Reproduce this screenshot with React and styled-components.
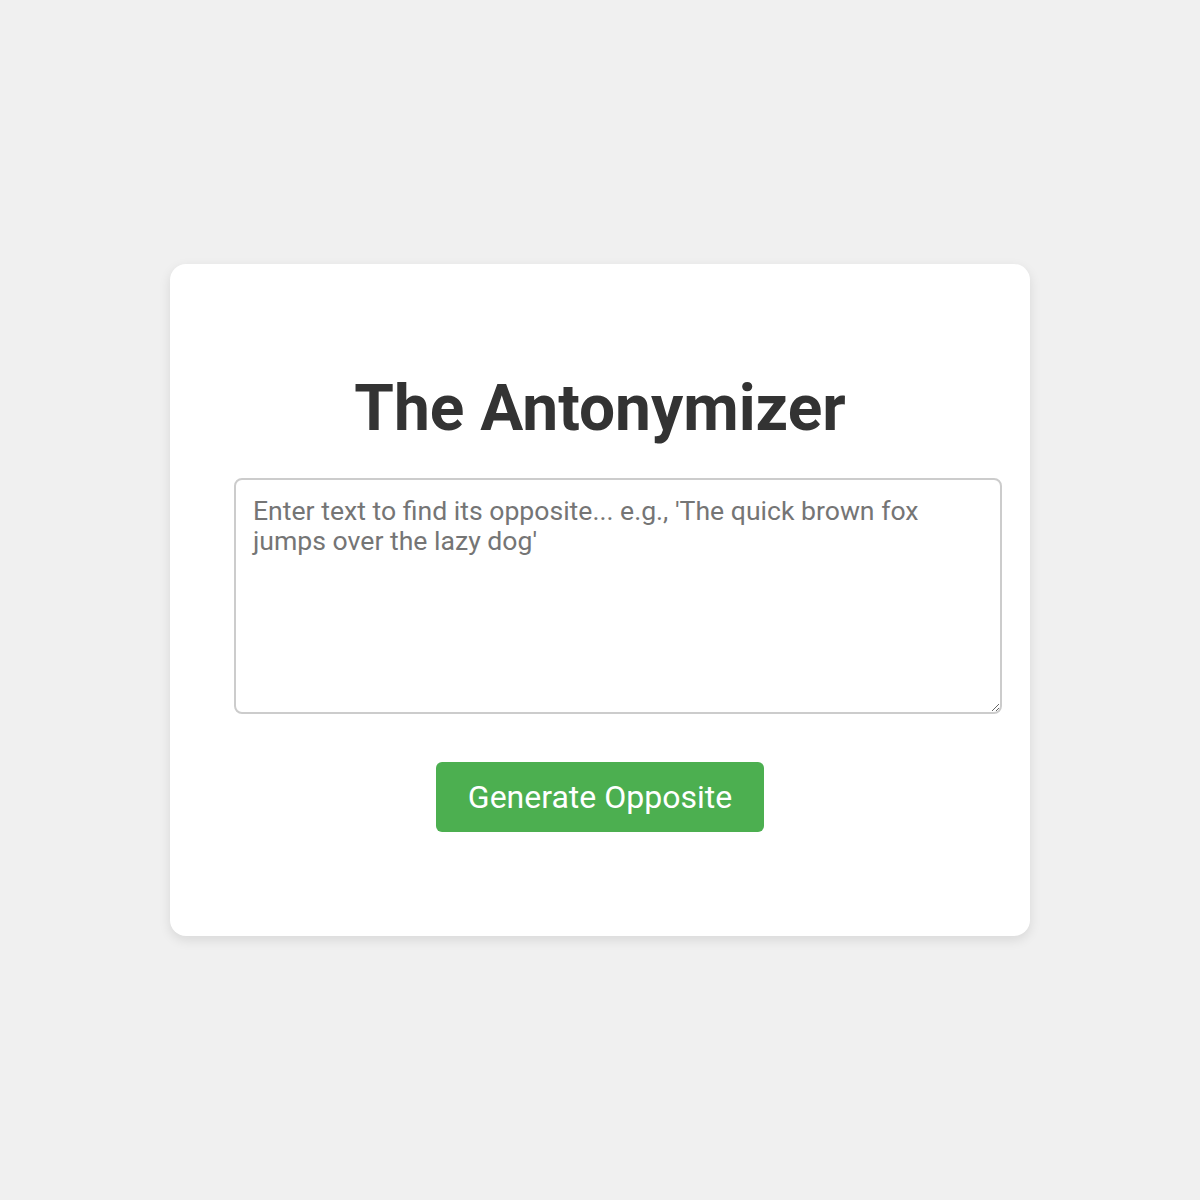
import React from 'react';
import styled, { createGlobalStyle } from 'styled-components';

const GlobalStyle = createGlobalStyle`
  body {
    margin: 0;
    background: #f0f0f0;
    font-family: Roboto, 'Liberation Sans', sans-serif;
  }
`;

const Page = styled.div`
  min-height: 100vh;
  display: flex;
  align-items: center;
  justify-content: center;
`;

const Card = styled.div`
  width: 860px;
  box-sizing: border-box;
  padding: 64px 64px 104px;
  background: #fff;
  border-radius: 16px;
  box-shadow: 0 4px 12px rgba(0, 0, 0, 0.1);
  text-align: center;
`;

const Title = styled.h1`
  font-size: 64px;
  font-weight: 700;
  color: #333;
  margin: 43px 0 32px;
`;

const Input = styled.textarea`
  display: block;
  width: 100%;
  height: 200px;
  padding: 16px 15px 16px 17px;
  border: 2px solid #ccc;
  border-radius: 8px;
  font-family: Roboto, 'Liberation Sans', sans-serif;
  font-size: 26.6px;
  line-height: 30px;
  color: #333;
  text-align: left;
  margin: 0;

  &::placeholder {
    color: #757575;
  }
`;

const Button = styled.button`
  margin-top: 48px;
  padding: 16px 32px;
  border: none;
  border-radius: 6px;
  background: #4caf50;
  color: #fff;
  font-family: Roboto, 'Liberation Sans', sans-serif;
  font-size: 32px;
  cursor: pointer;
`;

const App = () => {
  return (
    <Page>
      <GlobalStyle />
      <Card>
        <Title>The Antonymizer</Title>
        <Input placeholder="Enter text to find its opposite... e.g., 'The quick brown fox jumps over the lazy dog'" />
        <Button>Generate Opposite</Button>
      </Card>
    </Page>
  );
};

export default App;
